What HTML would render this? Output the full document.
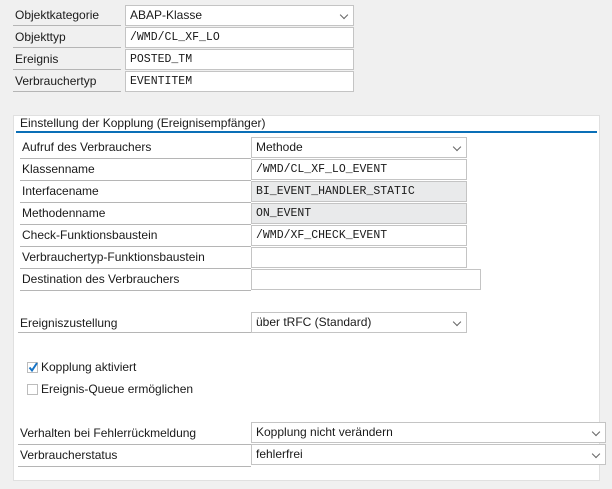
<!DOCTYPE html>
<html><head><meta charset="utf-8"><style>
body{margin:0;width:612px;height:489px;background:#f0f0f0;position:relative;overflow:hidden;font-family:"Liberation Sans",sans-serif;font-size:12px;color:#1a1a1a}
.a{position:absolute;box-sizing:border-box}
.lb{border-bottom:1px solid #b5b5b5;padding-left:2px;line-height:20px;white-space:nowrap}
.f{border:1px solid #c4c4c4;background:#fff;padding-left:4px;line-height:19px;white-space:nowrap}
.m{font-family:"Liberation Mono",monospace;font-size:11.5px}
.g{background:#e9eaeb}
.dd::after{content:"";position:absolute;right:6px;top:6px;width:5px;height:5px;border-right:1.5px solid #666;border-bottom:1.5px solid #666;transform:rotate(45deg)}
.cb{width:11px;height:11px;border:1px solid #bcbcbc;background:#fff}
</style></head><body>
<div class="a lb" style="left:13px;top:5px;width:108px;height:21px">Objektkategorie</div>
<div class="a f dd" style="left:125px;top:5px;width:229px;height:21px">ABAP-Klasse</div>
<div class="a lb" style="left:13px;top:27px;width:108px;height:21px">Objekttyp</div>
<div class="a f m" style="left:125px;top:27px;width:229px;height:21px">/WMD/CL_XF_LO</div>
<div class="a lb" style="left:13px;top:49px;width:108px;height:21px">Ereignis</div>
<div class="a f m" style="left:125px;top:49px;width:229px;height:21px">POSTED_TM</div>
<div class="a lb" style="left:13px;top:71px;width:108px;height:21px">Verbrauchertyp</div>
<div class="a f m" style="left:125px;top:71px;width:229px;height:21px">EVENTITEM</div>

<div class="a" style="left:13px;top:115px;width:587px;height:366px;background:#fff;border:1px solid #e0e0e0"></div>
<div class="a" style="left:20px;top:116px;line-height:15px">Einstellung der Kopplung (Ereignisempfänger)</div>
<div class="a" style="left:16px;top:131px;width:581px;height:2px;background:#0a6fb7"></div>

<div class="a lb" style="left:20px;top:137px;width:231px;height:22px">Aufruf des Verbrauchers</div>
<div class="a f dd" style="left:251px;top:137px;width:216px;height:21px">Methode</div>
<div class="a lb" style="left:20px;top:159px;width:231px;height:22px">Klassenname</div>
<div class="a f m" style="left:251px;top:159px;width:216px;height:21px">/WMD/CL_XF_LO_EVENT</div>
<div class="a lb" style="left:20px;top:181px;width:231px;height:22px">Interfacename</div>
<div class="a f m g" style="left:251px;top:181px;width:216px;height:21px">BI_EVENT_HANDLER_STATIC</div>
<div class="a lb" style="left:20px;top:203px;width:231px;height:22px">Methodenname</div>
<div class="a f m g" style="left:251px;top:203px;width:216px;height:21px">ON_EVENT</div>
<div class="a lb" style="left:20px;top:225px;width:231px;height:22px">Check-Funktionsbaustein</div>
<div class="a f m" style="left:251px;top:225px;width:216px;height:21px">/WMD/XF_CHECK_EVENT</div>
<div class="a lb" style="left:20px;top:247px;width:231px;height:22px">Verbrauchertyp-Funktionsbaustein</div>
<div class="a f" style="left:251px;top:247px;width:216px;height:21px"></div>
<div class="a lb" style="left:20px;top:269px;width:231px;height:22px">Destination des Verbrauchers</div>
<div class="a f" style="left:251px;top:269px;width:230px;height:21px"></div>

<div class="a lb" style="left:18px;top:313px;width:233px;height:20px">Ereigniszustellung</div>
<div class="a f dd" style="left:251px;top:312px;width:216px;height:21px">über tRFC (Standard)</div>

<div class="a cb" style="left:27px;top:362px"></div>
<svg class="a" style="left:27px;top:361px" width="12" height="12"><path d="M2.5 6.5 L5 9.5 L10 2" stroke="#1673c5" stroke-width="2" fill="none"/></svg>
<div class="a" style="left:41px;top:360px;line-height:15px">Kopplung aktiviert</div>
<div class="a cb" style="left:27px;top:384px"></div>
<div class="a" style="left:41px;top:382px;line-height:15px">Ereignis-Queue ermöglichen</div>

<div class="a lb" style="left:18px;top:423px;width:233px;height:22px">Verhalten bei Fehlerrückmeldung</div>
<div class="a f dd" style="left:251px;top:422px;width:355px;height:21px">Kopplung nicht verändern</div>
<div class="a lb" style="left:18px;top:445px;width:233px;height:22px">Verbraucherstatus</div>
<div class="a f dd" style="left:251px;top:444px;width:355px;height:21px">fehlerfrei</div>
</body></html>
